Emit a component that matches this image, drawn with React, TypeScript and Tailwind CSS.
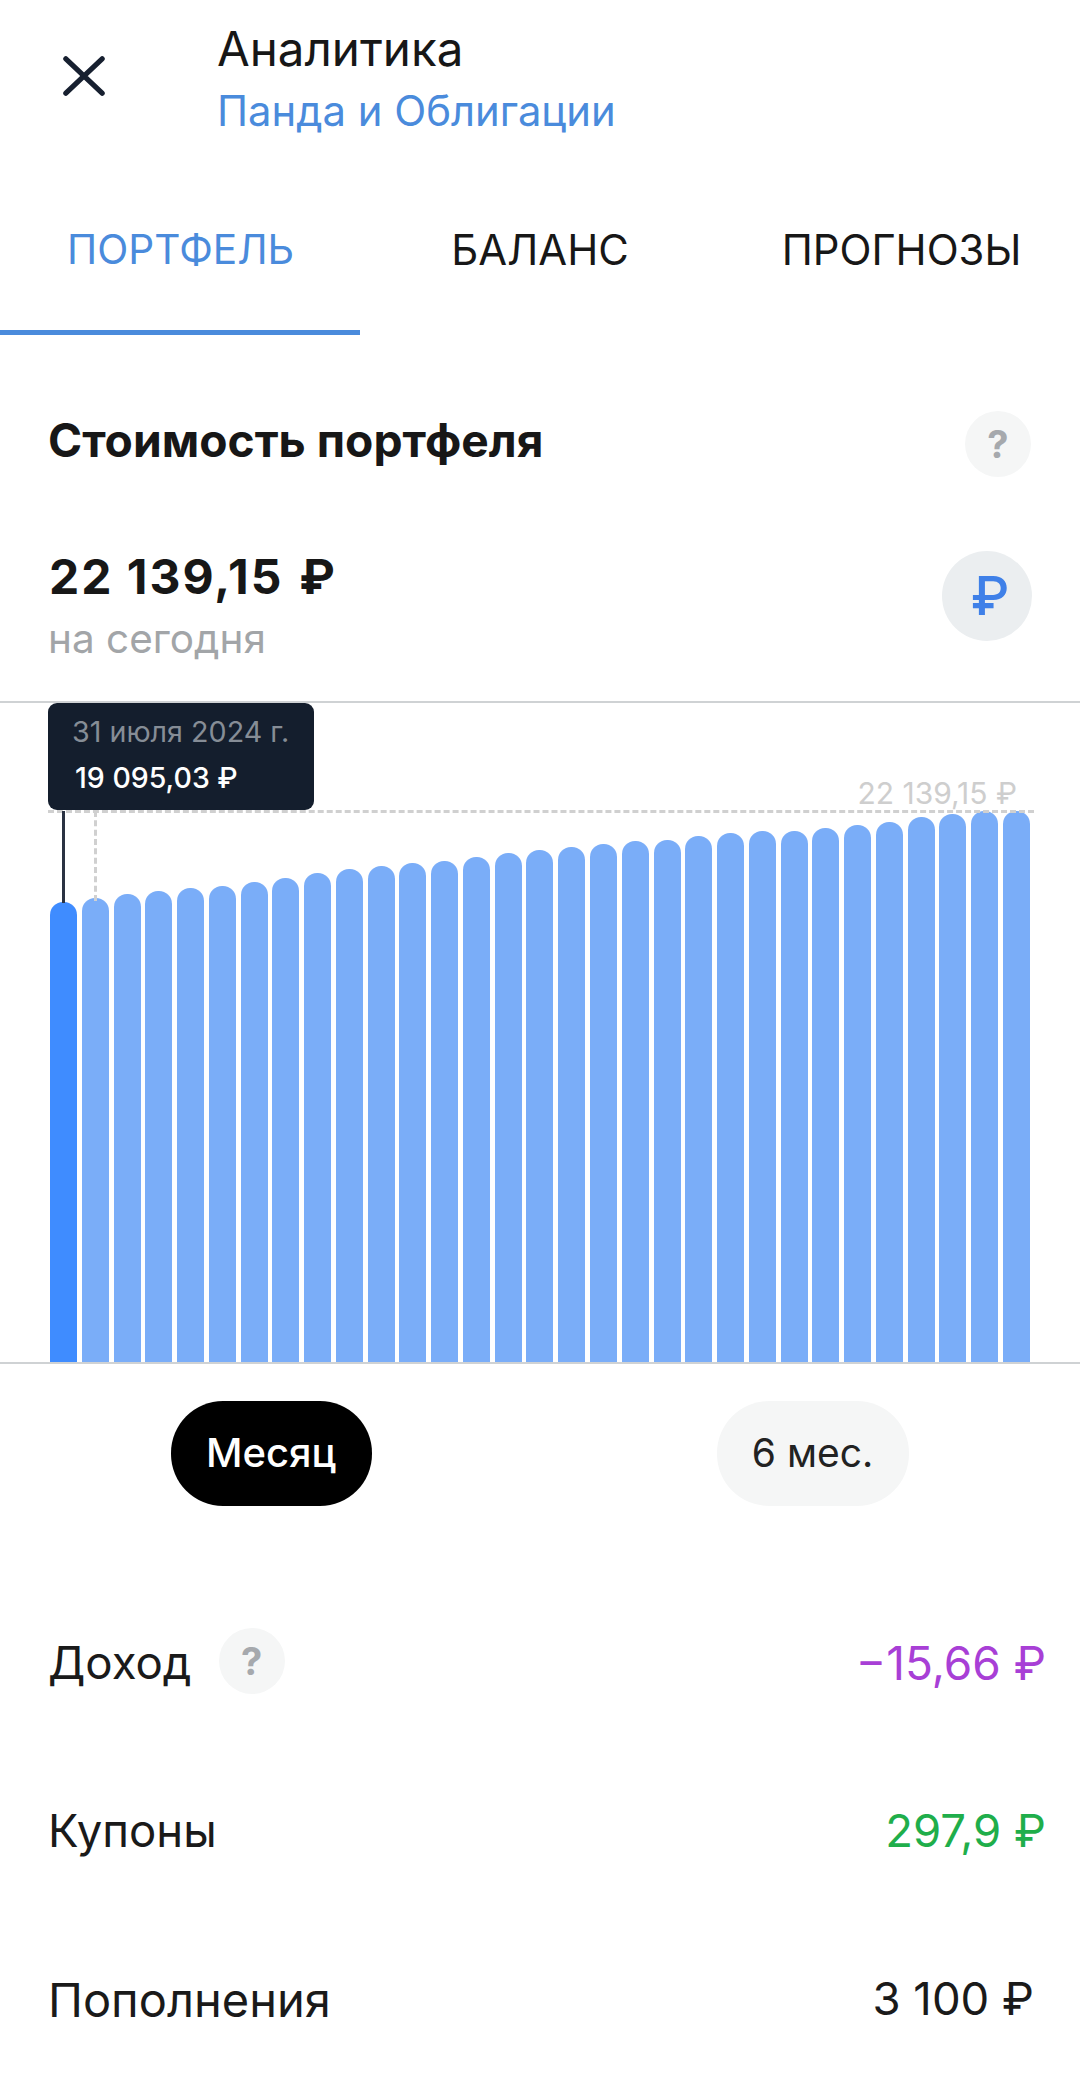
const tops = [902,898,894,891,888,886,882,878,873,869,866,863,861,857,853,850,847,844,841,840,836,833,831,831,828,825,822,817,814,811,811];

function Help() {
  return (
    <div className="flex h-[66px] w-[66px] items-center justify-center rounded-full bg-[#f5f6f6] text-[38px] font-bold leading-none text-[#a6a9ad]">?</div>
  );
}

function Row({ label, value, color, help, pr, labelSize, valueSize }: { label: string; value: string; color: string; help?: boolean; pr: string; labelSize: string; valueSize: string }) {
  return (
    <div className={`flex h-[168px] items-center justify-between pl-[48px] ${pr}`}>
      <div className="flex items-center gap-[27px]">
        <span className={`${labelSize} leading-none text-[#1a1a1a]`}>{label}</span>
        {help && <div className="-mt-[4px]"><Help /></div>}
      </div>
      <span className={`${valueSize} leading-none ${color}`}>{value}</span>
    </div>
  );
}

export default function App() {
  return (
    <div className="h-[2084px] w-[1080px] overflow-hidden bg-white font-['Inter',sans-serif]">
      <header className="flex h-[150px] items-start">
        <div className="ml-[63px] mt-[55px] h-[42px] w-[42px]">
          <svg viewBox="0 0 44 42" className="h-full w-full" fill="none" stroke="#172030" strokeWidth="5.5" strokeLinecap="round">
            <path d="M3 3 L41 39 M41 3 L3 39" />
          </svg>
        </div>
        <div className="ml-[112px] mt-[18px] flex flex-col">
          <span className="h-[62px] text-[47.5px] leading-[62px] text-[#171717]">Аналитика</span>
          <span className="h-[62px] text-[41.8px] leading-[62px] text-[#4a8bdc]">Панда и Облигации</span>
        </div>
      </header>

      <nav className="grid h-[185px] grid-cols-3">
        <div className="flex items-center justify-center border-b-[5px] border-[#4a8bdc] pl-[1px] pt-[21px] text-[40.6px] text-[#4a8bdc]">ПОРТФЕЛЬ</div>
        <div className="flex items-center justify-center pb-[5px] pt-[21px] text-[41.8px] text-[#171717]">БАЛАНС</div>
        <div className="flex items-center justify-center pb-[5px] pl-[3px] pt-[21px] text-[41.8px] text-[#171717]">ПРОГНОЗЫ</div>
      </nav>

      <div className="flex h-[154px] items-end justify-between pb-[12px] pl-[48px] pr-[49px]">
        <h2 className="pb-[7px] text-[46.2px] font-bold leading-[60px] text-[#171717]">Стоимость портфеля</h2>
        <Help />
      </div>

      <div className="flex h-[212px] items-start justify-between pl-[49px] pr-[48px]">
        <div className="flex flex-col pt-[57px]">
          <span className="flex h-[62px] gap-[16px] text-[48px] font-bold leading-[62px] tracking-[2px] text-[#171717]">
            <span>22 139,15</span>
            <span>₽</span>
          </span>
          <span className="-ml-[1px] text-[40.5px] leading-[62px] text-[#a2a5a8]">на сегодня</span>
        </div>
        <div className="mt-[62px] flex h-[90px] w-[90px] items-center justify-center rounded-full bg-[#ebeef0] pl-[6px] text-[54px] font-medium leading-none text-[#3f80e8]">₽</div>
      </div>

      <section className="relative h-[663px] border-y-2 border-[#cfd2d4]">
        <div className="flex h-full items-end gap-[4.77px] pl-[50px]">
          {tops.map((t, i) => (
            <div
              key={i}
              className={`w-[27px] shrink-0 rounded-t-[13px] ${i === 0 ? "bg-[#3f8cff]" : "bg-[#7aadf8]"}`}
              style={{ height: 1362 - t }}
            />
          ))}
        </div>
        <div className="absolute left-[48px] right-[46px] top-[107px] border-t-[3px] border-dashed border-[#d0d0d0]" />
        <div className="absolute left-[94px] top-[108px] h-[90px] border-l-[3px] border-dashed border-[#d0d0d0]" />
        <div className="absolute left-[62px] top-[108px] h-[92px] w-[3px] bg-[#2a3242]" />
        <span className="absolute right-[63px] top-[72px] text-[30px] leading-[36px] text-[#cecece]">22 139,15 ₽</span>
        <div className="absolute left-[48px] top-0 flex h-[107px] w-[266px] flex-col rounded-[9px] bg-[#141e2d] pl-[24px] pt-[9px]">
          <span className="text-[28.7px] leading-[40px] text-[#868d96]">31 июля 2024 г.</span>
          <span className="mt-[6px] pl-[3px] text-[28.5px] font-medium leading-[40px] text-white">19 095,03 ₽</span>
        </div>
      </section>

      <div className="grid h-[215px] grid-cols-2 items-center pb-[37px]">
        <div className="flex justify-center pl-[2px]">
          <div className="flex h-[105px] w-[201px] items-center justify-center rounded-[52px] bg-black text-[40px] font-medium text-white">Месяц</div>
        </div>
        <div className="flex justify-center pl-[5px]">
          <div className="flex h-[105px] w-[192px] items-center justify-center rounded-[52px] bg-[#f5f6f6] text-[39px] text-[#222]">6 мес.</div>
        </div>
      </div>

      <div className="flex flex-col">
        <Row label="Доход" value="−15,66 ₽" color="text-[#a83fd6]" help pr="pr-[34px]" labelSize="text-[45.6px]" valueSize="text-[46px]" />
        <Row label="Купоны" value="297,9 ₽" color="text-[#1fae4b]" pr="pr-[34px]" labelSize="text-[45.5px]" valueSize="text-[45.5px]" />
        <Row label="Пополнения" value="3 100 ₽" color="text-[#1a1a1a]" pr="pr-[46px]" labelSize="text-[47px]" valueSize="text-[45.5px]" />
      </div>
    </div>
  );
}
